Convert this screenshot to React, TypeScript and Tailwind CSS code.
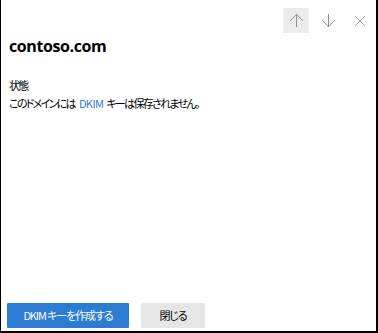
import { ArrowUp, ArrowDown, X } from 'lucide-react';

const jp = "font-['Segoe_UI','Noto_Sans_CJK_JP',sans-serif] [font-feature-settings:'palt']";

export default function App() {
  return (
    <div className="w-[378px] h-[333px] bg-white border-l border-r-2 border-b-2 border-black flex flex-col text-black">
      {/* nav buttons */}
      <div className="flex justify-end gap-[6px] pt-2 pr-[3px]">
        <button className="w-[26px] h-[25px] bg-[#ebebeb] flex items-center justify-center text-[#8a8a8a]">
          <ArrowUp size={21} strokeWidth={1.1} />
        </button>
        <button className="w-[26px] h-[25px] flex items-center justify-center text-[#8a8a8a]">
          <ArrowDown size={21} strokeWidth={1.1} />
        </button>
        <button className="w-[26px] h-[25px] flex items-center justify-center text-[#8a8a8a]">
          <X size={18} strokeWidth={1.1} />
        </button>
      </div>

      <h1 className="pl-2 mt-[1px] text-[16px] leading-[24px] font-bold font-['Open_Sans',sans-serif] tracking-[-0.4px]">
        contoso.com
      </h1>

      <div className={`pl-2 mt-[19px] text-[11px] leading-[17px] tracking-[-1.7px] ${jp}`}>
        <div>状態</div>
        <div className="mt-[1px]">
          このドメインには
          <span className="text-[#2b7cd3] tracking-[-0.6px] ml-[4px] mr-[3px]">DKIM</span>
          キーは保存されません。
        </div>
      </div>

      <div className="flex-1" />

      <div className={`flex gap-3 pl-[6px] pb-[3px] text-[11px] tracking-[-1.1px] ${jp}`}>
        <button className="w-[122px] h-[25px] bg-[#2b7cd3] text-white rounded-[1px]">
          DKIM キーを作成する
        </button>
        <button className="w-[64px] h-[25px] bg-[#e6e6e6] rounded-[1px]">閉じる</button>
      </div>
    </div>
  );
}
